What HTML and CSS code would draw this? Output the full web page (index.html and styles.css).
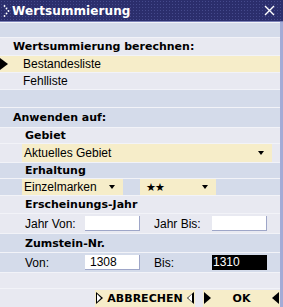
FILE: index.html
```html
<!DOCTYPE html>
<html lang="de">
<head>
    <meta charset="UTF-8">
    <title>Wertsummierung</title>
    <link rel="stylesheet" href="styles.css">
</head>
<body>
    <div class="window">
        <div class="titlebar">
            <svg class="grip" width="8" height="14" viewBox="0 0 8 14">
                <circle cx="1.5" cy="2" r="0.9"/><circle cx="3.5" cy="4.5" r="0.9"/>
                <circle cx="5.5" cy="7" r="0.9"/><circle cx="3.5" cy="9.5" r="0.9"/>
                <circle cx="1.5" cy="12" r="0.9"/>
            </svg>
            <span class="title">Wertsummierung</span>
            <svg class="close" width="11" height="11" viewBox="0 0 11 11">
                <path d="M1 1 L10 10 M10 1 L1 10" stroke="#fff" stroke-width="1.4"/>
            </svg>
        </div>

        <div class="body">
            <div class="row blue h15"></div>
            <div class="row light h18 head">Wertsummierung berechnen:</div>
            <div class="row selected h17 item">Bestandesliste</div>
            <div class="row light h17 item">Fehlliste</div>
            <div class="row blue h18"></div>

            <div class="row blue h20 head">Anwenden auf:</div>
            <div class="row light h16 sub">Gebiet</div>
            <div class="row light h19 field">
                <div class="select wide">Aktuelles Gebiet<span class="caret"></span></div>
            </div>
            <div class="row blue h16 sub">Erhaltung</div>
            <div class="row blue h17 field">
                <div class="select first">Einzelmarken<span class="caret"></span></div>
                <div class="select second">★★<span class="caret"></span></div>
            </div>
            <div class="row light h18 sub">Erscheinungs-Jahr</div>
            <div class="row light h20 field">
                <span class="label">Jahr Von:</span>
                <div class="input"></div>
                <span class="label">Jahr Bis:</span>
                <div class="input"></div>
            </div>
            <div class="row blue h19 sub">Zumstein-Nr.</div>
            <div class="row blue h20 field">
                <span class="label">Von:</span>
                <div class="input">1308</div>
                <span class="label">Bis:</span>
                <div class="input active">1310</div>
            </div>
            <div class="row light h16"></div>
            <div class="row light h19 buttons">
                <div class="btn cancel"><span class="tri-r outline"></span>ABBRECHEN<span class="tri-l outline"></span></div>
                <div class="btn ok"><span class="tri-r"></span>OK<span class="tri-l"></span></div>
            </div>
        </div>
    </div>
</body>
</html>
```

FILE: styles.css
```css
body {
    margin: 0;
    background: #fff;
    font-family: 'Liberation Sans', Arial, sans-serif;
    font-size: 12px;
    color: #000;
}
.window {
    width: 283px;
    height: 307px;
    overflow: hidden;
    display: flex;
    flex-direction: column;
}
.titlebar {
    height: 21px;
    flex: none;
    display: flex;
    align-items: center;
    background-color: #2b2e6c;
    background-image: radial-gradient(circle, #454a8c 0.7px, transparent 0.9px);
    background-size: 3px 3px;
    border-bottom: 1px solid #7b82b8;
    color: #fff;
}
.grip {
    fill: #fff;
    margin-left: 3px;
}
.title {
    font-family: 'DejaVu Sans', sans-serif;
    font-weight: bold;
    font-size: 12px;
    margin-left: 1px;
    letter-spacing: 0.1px;
}
.close {
    margin-left: auto;
    margin-right: 8px;
}
.body {
    flex: 1;
    display: flex;
    flex-direction: column;
    border-right: 3px solid #a4abd6;
}
.row {
    display: flex;
    align-items: center;
    box-sizing: border-box;
    border-top: 1px solid #f2f3f8;
    position: relative;
}
.blue { background: #d4dbea; }
.light { background: #e8e9f1; }
.selected { background: #f6edc9; }
.h15 { height: 15px; }
.h16 { height: 16px; }
.h17 { height: 17px; }
.h18 { height: 18px; }
.h19 { height: 19px; }
.h20 { height: 20px; }

.head, .sub {
    font-family: 'DejaVu Sans', sans-serif;
    font-weight: bold;
    font-size: 11px;
}
.head { padding-left: 13px; }
.sub { padding-left: 25px; }
.item { padding-left: 23px; }
.selected::before {
    content: "";
    position: absolute;
    left: 0;
    top: 2px;
    border-style: solid;
    border-width: 6px 0 6px 8px;
    border-color: transparent transparent transparent #000;
}

.field { padding-left: 22px; }
.select {
    background: #f6edc9;
    height: 100%;
    display: flex;
    align-items: center;
    padding-left: 2px;
    box-sizing: border-box;
    position: relative;
}
.select.wide { width: 250px; }
.select.first { width: 101px; }
.select.second { width: 76px; margin-left: 17px; padding-left: 6px; font-size: 11px; letter-spacing: -1px; }
.caret {
    position: absolute;
    right: 8px;
    top: 50%;
    margin-top: -2px;
    border-style: solid;
    border-width: 4px 3.5px 0 3.5px;
    border-color: #000 transparent transparent transparent;
}
.label {
    width: 63px;
    padding-left: 3px;
    box-sizing: border-box;
}
.input {
    width: 55px;
    height: 15px;
    background: #fff;
    border-right: 1px solid #9ea6c8;
    border-bottom: 1px solid #9ea6c8;
    box-sizing: border-box;
    padding-left: 5px;
    line-height: 14px;
}
.input + .label {
    margin-left: 9px;
    width: 63px;
    padding-left: 5px;
}
.input.active {
    background: #000;
    color: #fff;
    padding-left: 1px;
    border-color: #000;
}

.buttons {
    padding-left: 95px;
    gap: 8px;
}
.btn {
    height: 17px;
    background: #f6edc9;
    display: flex;
    align-items: center;
    justify-content: space-between;
    font-family: 'DejaVu Sans', sans-serif;
    font-weight: bold;
    font-size: 11px;
    box-sizing: border-box;
    padding: 0 1px;
}
.cancel { width: 100px; }
.ok { width: 77px; }
.tri-r, .tri-l {
    width: 0;
    height: 0;
    border-style: solid;
    position: relative;
}
.tri-r {
    border-width: 6px 0 6px 7px;
    border-color: transparent transparent transparent #000;
}
.tri-l {
    border-width: 6px 7px 6px 0;
    border-color: transparent #000 transparent transparent;
}
.tri-r.outline::after, .tri-l.outline::after {
    content: "";
    position: absolute;
    border-style: solid;
}
.tri-r.outline::after {
    left: -6px;
    top: -4px;
    border-width: 4px 0 4px 4.5px;
    border-color: transparent transparent transparent #fff;
}
.tri-l.outline::after {
    left: 1.5px;
    top: -4px;
    border-width: 4px 4.5px 4px 0;
    border-color: transparent #fff transparent transparent;
}
```
